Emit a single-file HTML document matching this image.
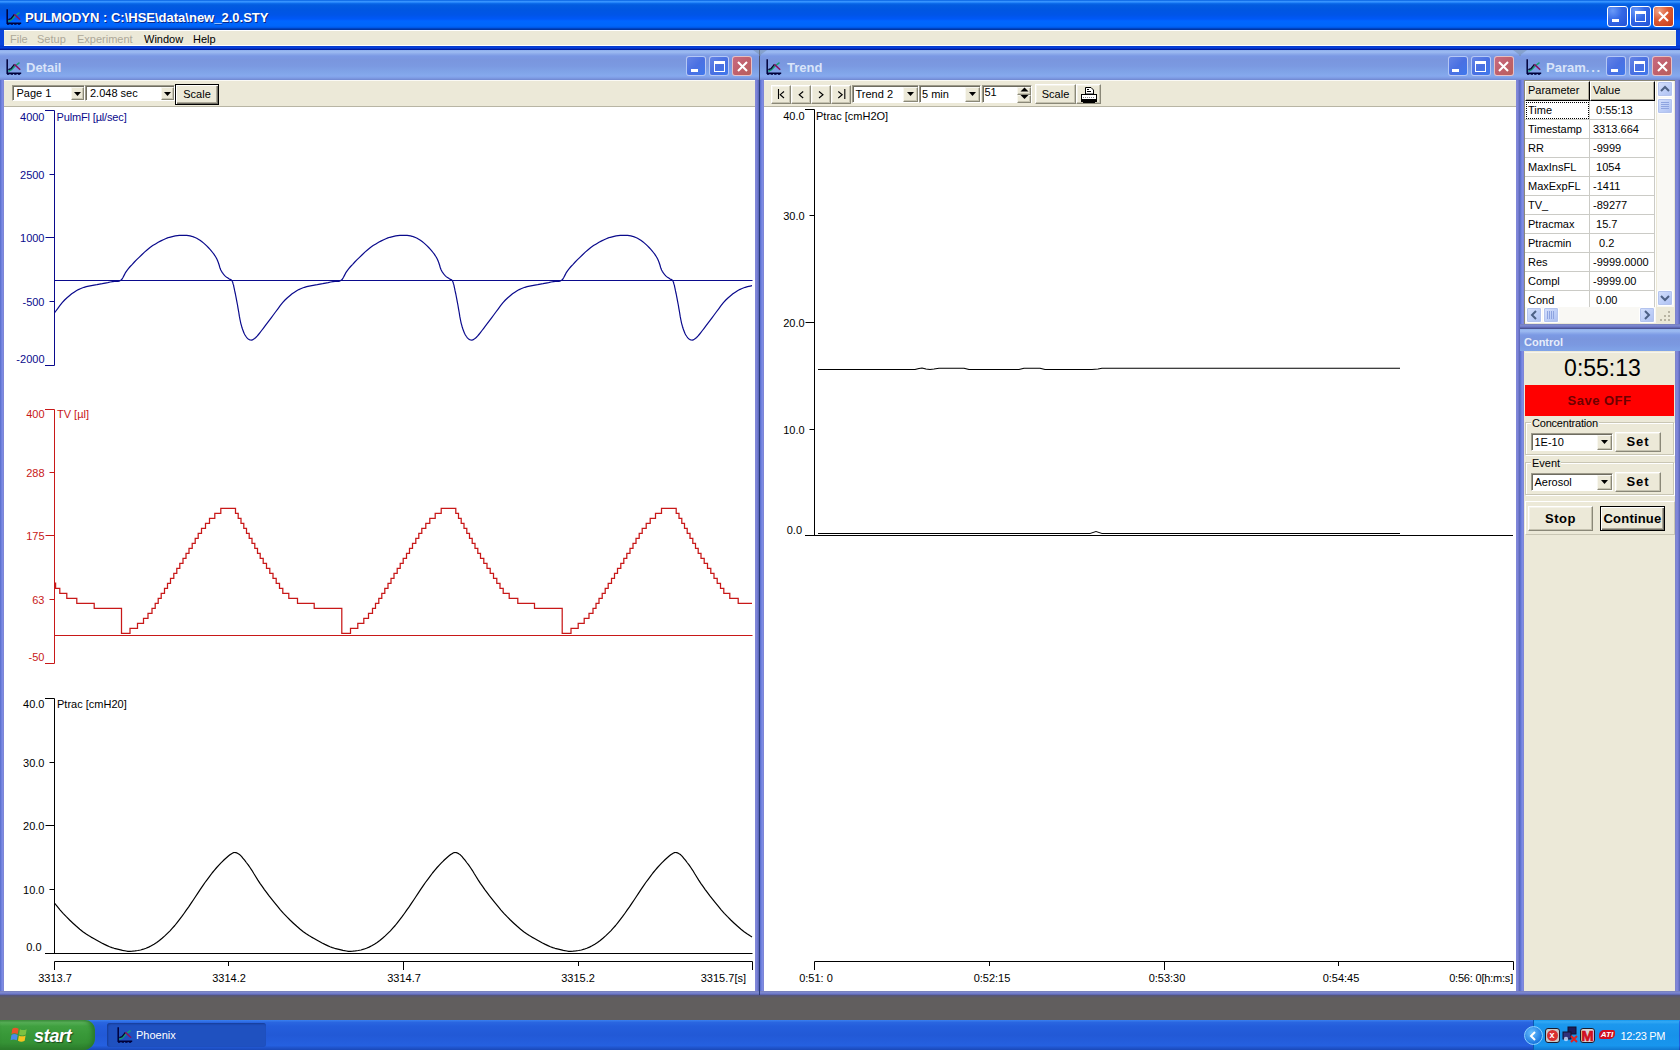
<!DOCTYPE html>
<html><head><meta charset="utf-8"><title>PULMODYN</title>
<style>
*{box-sizing:border-box;margin:0;padding:0}
html,body{width:1680px;height:1050px;overflow:hidden;background:#615e5e;font-family:"Liberation Sans",sans-serif;font-size:11px;color:#000}
.abs{position:absolute}
#frame{position:absolute;left:0;top:0;width:1680px;height:50px;background:linear-gradient(180deg,#0b45dd 0,#0b45dd 45px,#0838c8 46px,#0540dc 47.5px,#0430c0 48.6px,#001088 50px)}
#mtitle{position:absolute;left:0;top:0;width:1680px;height:30px;
 background:linear-gradient(180deg,#0058d8 0,#2a88fc 1px,#3c98ff 1.7px,#2080f8 2.7px,#0a68e8 3.6px,#035ce0 5px,#0056e2 10px,#0055e8 15px,#0058f8 19px,#0066ff 21px,#0066fa 26px,#0058e8 27.5px,#0040b8 28.7px,#003098 30px)}
#mtitle .t{position:absolute;left:25px;top:10px;font-size:13px;font-weight:bold;color:#fff;white-space:nowrap;letter-spacing:0px;text-shadow:1px 1px 0 #0a2a8a}
#menu{position:absolute;left:4px;top:30px;width:1672px;height:16px;background:#ece9d8;border-bottom:1px solid #fff;border-top:1px solid #fff}
#menu span{position:absolute;top:2px;line-height:13px;font-size:11px;white-space:nowrap}
#menu .d{color:#aca899}

.cw{position:absolute;background:linear-gradient(90deg,#5668c8 0,#6c80dc 1.2px,#7f8be4 2.6px,#7c84cc 4.2px,#7c84cc calc(100% - 4.4px),#8289de calc(100% - 3px),#7078cc calc(100% - 1.4px),#5564b4 100%)}
.cwb{position:absolute;left:0;right:0;bottom:0;height:4.6px;background:linear-gradient(180deg,#7880b8 0,#7c88d2 1.8px,#6a74c4 3px,#4c5494 4.4px)}
.ct{position:absolute;left:0;top:0;right:0;height:30px;
 background:linear-gradient(180deg,#8fb0ee 0,#9dbbf1 2px,#8ba9ea 4px,#7b99e4 6px,#7a96de 10px,#7b99e1 16px,#80a4e8 22px,#86a9ee 26px,#7e9ce4 28px,#6f87d0 30px)}
.ct .t{position:absolute;left:26px;top:10px;font-size:13px;font-weight:bold;color:#d9e4f9;white-space:nowrap}
.tb{position:absolute;background:#ece9d8}
.wh{position:absolute;background:#fff}
.lbl{position:absolute;white-space:nowrap;font-size:11px;line-height:13px}
.r{text-align:right}
.combo{position:absolute;background:#fff;border:1px solid;border-color:#9d9a8a #fff #fff #9d9a8a;box-shadow:inset 1px 1px 0 #6e6c60}
.combo .v{position:absolute;font-size:11px;line-height:13px;white-space:nowrap}
.combo .a{position:absolute;right:0px;top:1px;background:#ece9d8;border:1px solid;border-color:#f8f7f0 #8a8878 #8a8878 #f8f7f0;box-shadow:inset -1px -1px 0 #c8c5b2}
.btn{position:absolute;background:#ece9d8;border:1px solid;border-color:#fff #8a8878 #8a8878 #fff;box-shadow:inset -1px -1px 0 #c5c2b0,inset 1px 1px 0 #f4f2e8;text-align:center;white-space:nowrap}
.btn.def{border-color:#000;box-shadow:inset 1px 1px 0 #fff,inset -1px -1px 0 #716f64,inset -2px -2px 0 #aca899}
.xb{position:absolute;width:21px;height:21px;border-radius:3px;border:1px solid #fff}
.xb.in{border-color:rgba(255,255,255,0.6);width:20px;height:20px}

.ax{position:absolute}
.grid{position:absolute;background:#fff}
.gc{position:absolute;height:19px;border-right:1px solid #cbcbc6;border-bottom:1px solid #cbcbc6;background:#fff;font-size:11px;line-height:18px;white-space:nowrap;overflow:hidden}
.gh{position:absolute;height:20px;background:#ece9d8;border:1px solid;border-color:#fff #000 #000 #fff;box-shadow:inset -1px -1px 0 #aca899;font-size:11px;line-height:17px;white-space:nowrap;padding-left:2px}
.sb{position:absolute;background:#f9f8f4}
.sbb{position:absolute;width:16px;height:16px;border-radius:2px;border:1px solid #fff;background:linear-gradient(135deg,#d6e0fb 0%,#bccdf7 60%,#aebff0 100%);box-shadow:0 0 0 1px #b4c4ee inset}
#task{position:absolute;left:0;top:1020px;width:1680px;height:30px;background:linear-gradient(180deg,#3a80f0 0%,#2a66e0 8%,#245edc 20%,#2259d6 50%,#2560e0 85%,#1a48b8 100%)}
#start{position:absolute;left:0;top:0;width:95px;height:30px;border-radius:0 10px 12px 0;background:linear-gradient(180deg,#4a9a4a 0%,#5ab25a 8%,#40a040 20%,#389838 50%,#359235 75%,#2c7c2c 100%);box-shadow:inset -3px 0 4px #2a7a2a}
#start .t{position:absolute;left:34px;top:5.6px;font-size:18px;font-weight:bold;font-style:italic;color:#fff;text-shadow:1px 1px 1px #1a4a1a;letter-spacing:-0.3px}
#tray{position:absolute;left:1533px;top:0;width:146px;height:30px;background:linear-gradient(180deg,#169af0 0%,#33a8f4 6%,#1c98ee 14%,#1792ea 50%,#1896ee 85%,#1078d0 100%);border-left:1px solid #0c58b0}
</style></head>
<body>
<div id="frame">
<div id="mtitle"><svg class="abs" style="left:6px;top:8.5px" width="16" height="16" viewBox="0 0 16 16"><path d="M1.2 0.3V14.2H15.2" stroke="#00003a" stroke-width="1.5" fill="none"/><path d="M1 15.3H15.2" stroke="#00003a" stroke-width="1" stroke-dasharray="2.4 1.2" fill="none"/><path d="M2.3 12.3L5.5 10.6L9 7L13.5 3.6" stroke="#12a070" stroke-width="1.4" fill="none"/><path d="M2.3 10.6L5 9.6L8.4 5.4" stroke="#0a0a30" stroke-width="1.4" fill="none"/><path d="M8.4 5.4L14.2 10.8" stroke="#8a1060" stroke-width="1.5" fill="none"/></svg><div class="t">PULMODYN : C:\HSE\data\new_2.0.STY</div><div class="xb" style="left:1607px;top:6px;background:radial-gradient(circle at 25% 20%,#6a9af8 0%,#3468e6 45%,#2152d6 100%)"><div class="abs" style="left:4px;top:12px;width:7px;height:3px;background:#fff"></div></div><div class="xb" style="left:1630px;top:6px;background:radial-gradient(circle at 25% 20%,#6a9af8 0%,#3468e6 45%,#2152d6 100%)"><div class="abs" style="left:4px;top:4px;width:11px;height:11px;border:1px solid #fff;border-top-width:3px"></div></div><div class="xb" style="left:1653px;top:6px;background:radial-gradient(circle at 25% 20%,#f0a488 0%,#dc5a34 45%,#c43c18 100%)"><svg class="abs" style="left:0px;top:0px" width="19" height="19" viewBox="0 0 19 19"><path d="M5 5L14 14M14 5L5 14" stroke="#fff" stroke-width="2.1" stroke-linecap="butt"/></svg></div></div>
<div id="menu"><span class="d" style="left:6px">File</span><span class="d" style="left:33px">Setup</span><span class="d" style="left:73px">Experiment</span><span style="left:140px">Window</span><span style="left:189px">Help</span></div>
</div>
<div class="cw" style="left:0px;top:50px;width:759px;height:945.3px"><div class="ct"><svg class="abs" style="left:6px;top:9px" width="16" height="16" viewBox="0 0 16 16"><path d="M1.2 0.3V14.2H15.2" stroke="#00003a" stroke-width="1.5" fill="none"/><path d="M1 15.3H15.2" stroke="#00003a" stroke-width="1" stroke-dasharray="2.4 1.2" fill="none"/><path d="M2.3 12.3L5.5 10.6L9 7L13.5 3.6" stroke="#12a070" stroke-width="1.4" fill="none"/><path d="M2.3 10.6L5 9.6L8.4 5.4" stroke="#0a0a30" stroke-width="1.4" fill="none"/><path d="M8.4 5.4L14.2 10.8" stroke="#8a1060" stroke-width="1.5" fill="none"/></svg><div class="t" style="left:26px">Detail</div><div class="xb in" style="left:686px;top:6px;background:linear-gradient(135deg,#6484e6 0%,#4a70e2 50%,#3f78ec 100%)"><div class="abs" style="left:3.5px;top:11.5px;width:7px;height:3px;background:#fff"></div></div><div class="xb in" style="left:709px;top:6px;background:linear-gradient(135deg,#6484e6 0%,#4a70e2 50%,#3f78ec 100%)"><div class="abs" style="left:3.5px;top:3.5px;width:11px;height:11px;border:1px solid #fff;border-top-width:3px"></div></div><div class="xb in" style="left:732px;top:6px;background:linear-gradient(135deg,#c86a80 0%,#c0606c 50%,#b8605c 100%)"><svg class="abs" style="left:-0.5px;top:-0.5px" width="19" height="19" viewBox="0 0 19 19"><path d="M5 5L14 14M14 5L5 14" stroke="#fff" stroke-width="2.1" stroke-linecap="butt"/></svg></div></div><div class="tb" style="left:4px;top:30px;width:750.7px;height:27px;border-top:1px solid #fbfaf5;border-bottom:1px solid #b8b5a4"></div><div class="combo" style="left:11.5px;top:35px;width:73.5px;height:16px"><div class="v" style="left:4px;top:1px">Page 1</div><div class="a" style="width:13px;height:13px"><svg class="abs" style="left:2.0px;top:3.5px" width="7" height="4" viewBox="0 0 7 4"><path d="M0 0H7L3.5 4Z" fill="#000"/></svg></div></div><div class="combo" style="left:85px;top:35px;width:89.5px;height:16px"><div class="v" style="left:4px;top:1px">2.048 sec</div><div class="a" style="width:13px;height:13px"><svg class="abs" style="left:2.0px;top:3.5px" width="7" height="4" viewBox="0 0 7 4"><path d="M0 0H7L3.5 4Z" fill="#000"/></svg></div></div><div class="btn def" style="left:175px;top:34px;width:44px;height:21px;line-height:19px;">Scale</div><div class="wh" style="left:4px;top:57px;width:750.7px;height:883.7px"></div><svg class="abs" style="left:0;top:0" width="758" height="940" viewBox="0 50 758 940" shape-rendering="auto"><path d="M45 110.5H54.5V365.5H45" stroke="#0a0a8c" stroke-width="1" fill="none"/><path d="M49.5 174.5H54.5" stroke="#0a0a8c" stroke-width="1"/><path d="M45.5 237.5H54.5" stroke="#0a0a8c" stroke-width="1"/><path d="M49.5 301.5H54.5" stroke="#0a0a8c" stroke-width="1"/><path d="M54.5 280.5H752.5" stroke="#0a0a8c" stroke-width="1"/><path d="M54.5 312.9 L55.1 312.0 L57.5 308.8 L59.8 305.7 L62.2 302.7 L64.6 300.0 L67.0 297.7 L69.4 295.7 L71.7 293.8 L74.1 292.2 L76.3 290.8 L78.4 289.6 L80.3 288.7 L82.1 288.0 L84.1 287.3 L86.3 286.7 L88.8 286.1 L91.4 285.6 L94.1 285.1 L96.9 284.7 L99.6 284.2 L102.3 283.7 L105.1 283.1 L107.8 282.6 L110.3 282.0 L112.6 281.6 L114.6 281.4 L116.3 281.4 L117.9 281.3 L119.4 281.1 L120.8 280.3 L122.1 279.0 L123.1 277.2 L124.2 275.1 L125.3 272.9 L126.7 270.8 L128.4 268.7 L130.2 266.5 L132.3 264.3 L134.4 262.0 L136.7 259.7 L139.1 257.3 L141.8 254.7 L144.5 252.1 L147.3 249.7 L150.0 247.5 L152.7 245.6 L155.5 243.9 L158.2 242.3 L160.9 240.9 L163.3 239.7 L165.5 238.7 L167.5 237.9 L169.5 237.3 L171.4 236.8 L173.3 236.3 L175.3 235.9 L177.4 235.6 L179.4 235.4 L181.4 235.3 L183.3 235.3 L185.1 235.3 L186.8 235.4 L188.4 235.6 L190.1 235.9 L191.7 236.3 L193.4 236.9 L195.0 237.5 L196.7 238.3 L198.3 239.2 L200.0 240.3 L201.7 241.5 L203.4 242.9 L205.1 244.4 L206.7 245.9 L208.3 247.5 L209.8 249.1 L211.3 250.8 L212.6 252.5 L213.9 254.2 L215.0 255.8 L215.9 257.2 L216.6 258.6 L217.2 259.8 L217.7 261.1 L218.3 262.5 L218.8 264.0 L219.3 265.5 L219.7 267.1 L220.2 268.6 L220.8 270.0 L221.5 271.3 L222.4 272.6 L223.3 273.8 L224.1 274.8 L225.0 275.8 L225.8 276.6 L226.7 277.3 L227.5 277.8 L228.3 278.3 L229.0 278.8 L229.6 279.2 L230.2 279.4 L230.8 279.6 L231.3 279.9 L231.7 280.3 L232.1 280.8 L232.3 281.4 L232.6 282.0 L232.8 282.7 L233.0 283.5 L233.2 284.2 L233.4 284.7 L233.6 285.4 L233.8 286.6 L234.2 288.3 L234.7 290.9 L235.4 294.0 L236.1 297.6 L236.8 301.4 L237.5 305.0 L238.1 308.7 L238.8 312.5 L239.4 316.4 L240.1 320.0 L240.8 323.3 L241.6 326.2 L242.4 328.8 L243.2 331.1 L244.1 333.2 L245.0 335.0 L246.0 336.5 L247.0 337.8 L248.1 338.9 L249.2 339.6 L250.3 340.0 L251.4 340.1 L252.4 339.9 L253.4 339.3 L254.6 338.5 L255.8 337.5 L257.1 336.2 L258.5 334.5 L260.0 332.6 L261.6 330.5 L263.3 328.3 L265.1 325.9 L267.0 323.4 L269.1 320.6 L271.2 317.8 L273.3 315.0 L275.5 312.0 L277.9 308.8 L280.2 305.7 L282.6 302.7 L285.0 300.0 L287.4 297.7 L289.8 295.7 L292.1 293.8 L294.5 292.2 L296.7 290.8 L298.8 289.6 L300.7 288.7 L302.5 288.0 L304.5 287.3 L306.7 286.7 L309.2 286.1 L311.8 285.6 L314.5 285.1 L317.3 284.7 L320.0 284.2 L322.7 283.7 L325.5 283.1 L328.2 282.6 L330.7 282.0 L333.0 281.6 L335.0 281.4 L336.7 281.4 L338.3 281.3 L339.8 281.1 L341.2 280.3 L342.5 279.0 L343.5 277.2 L344.6 275.1 L345.7 272.9 L347.1 270.8 L348.8 268.7 L350.6 266.5 L352.7 264.3 L354.8 262.0 L357.1 259.7 L359.5 257.3 L362.2 254.7 L364.9 252.1 L367.7 249.7 L370.4 247.5 L373.1 245.6 L375.9 243.9 L378.6 242.3 L381.3 240.9 L383.7 239.7 L385.9 238.7 L387.9 237.9 L389.9 237.3 L391.8 236.8 L393.7 236.3 L395.7 235.9 L397.8 235.6 L399.8 235.4 L401.8 235.3 L403.7 235.3 L405.5 235.3 L407.2 235.4 L408.8 235.6 L410.5 235.9 L412.1 236.3 L413.8 236.9 L415.4 237.5 L417.1 238.3 L418.7 239.2 L420.4 240.3 L422.1 241.5 L423.8 242.9 L425.5 244.4 L427.1 245.9 L428.7 247.5 L430.2 249.1 L431.7 250.8 L433.0 252.5 L434.3 254.2 L435.4 255.8 L436.3 257.2 L437.0 258.6 L437.6 259.8 L438.1 261.1 L438.7 262.5 L439.2 264.0 L439.7 265.5 L440.1 267.1 L440.6 268.6 L441.2 270.0 L441.9 271.3 L442.8 272.6 L443.7 273.8 L444.5 274.8 L445.4 275.8 L446.2 276.6 L447.1 277.3 L447.9 277.8 L448.7 278.3 L449.4 278.8 L450.0 279.2 L450.6 279.4 L451.2 279.6 L451.7 279.9 L452.1 280.3 L452.5 280.8 L452.7 281.4 L453.0 282.0 L453.2 282.7 L453.4 283.5 L453.6 284.2 L453.8 284.7 L454.0 285.4 L454.2 286.6 L454.6 288.3 L455.1 290.9 L455.8 294.0 L456.5 297.6 L457.2 301.4 L457.9 305.0 L458.5 308.7 L459.2 312.5 L459.8 316.4 L460.5 320.0 L461.2 323.3 L462.0 326.2 L462.8 328.8 L463.6 331.1 L464.5 333.2 L465.4 335.0 L466.4 336.5 L467.4 337.8 L468.5 338.9 L469.6 339.6 L470.7 340.0 L471.8 340.1 L472.8 339.9 L473.8 339.3 L475.0 338.5 L476.2 337.5 L477.5 336.2 L478.9 334.5 L480.4 332.6 L482.0 330.5 L483.7 328.3 L485.5 325.9 L487.4 323.4 L489.5 320.6 L491.6 317.8 L493.7 315.0 L495.9 312.0 L498.3 308.8 L500.6 305.7 L503.0 302.7 L505.4 300.0 L507.8 297.7 L510.2 295.7 L512.5 293.8 L514.9 292.2 L517.1 290.8 L519.2 289.6 L521.1 288.7 L522.9 288.0 L524.9 287.3 L527.1 286.7 L529.6 286.1 L532.2 285.6 L534.9 285.1 L537.7 284.7 L540.4 284.2 L543.1 283.7 L545.9 283.1 L548.6 282.6 L551.1 282.0 L553.4 281.6 L555.4 281.4 L557.1 281.4 L558.7 281.3 L560.2 281.1 L561.6 280.3 L562.9 279.0 L563.9 277.2 L565.0 275.1 L566.1 272.9 L567.5 270.8 L569.2 268.7 L571.0 266.5 L573.1 264.3 L575.2 262.0 L577.5 259.7 L579.9 257.3 L582.6 254.7 L585.3 252.1 L588.1 249.7 L590.8 247.5 L593.5 245.6 L596.3 243.9 L599.0 242.3 L601.7 240.9 L604.1 239.7 L606.3 238.7 L608.3 237.9 L610.3 237.3 L612.2 236.8 L614.1 236.3 L616.1 235.9 L618.2 235.6 L620.2 235.4 L622.2 235.3 L624.1 235.3 L625.9 235.3 L627.6 235.4 L629.2 235.6 L630.9 235.9 L632.5 236.3 L634.2 236.9 L635.8 237.5 L637.5 238.3 L639.1 239.2 L640.8 240.3 L642.5 241.5 L644.2 242.9 L645.9 244.4 L647.5 245.9 L649.1 247.5 L650.6 249.1 L652.1 250.8 L653.4 252.5 L654.7 254.2 L655.8 255.8 L656.7 257.2 L657.4 258.6 L658.0 259.8 L658.5 261.1 L659.1 262.5 L659.6 264.0 L660.1 265.5 L660.5 267.1 L661.0 268.6 L661.6 270.0 L662.3 271.3 L663.2 272.6 L664.1 273.8 L664.9 274.8 L665.8 275.8 L666.6 276.6 L667.5 277.3 L668.3 277.8 L669.1 278.3 L669.8 278.8 L670.4 279.2 L671.0 279.4 L671.6 279.6 L672.1 279.9 L672.5 280.3 L672.9 280.8 L673.1 281.4 L673.4 282.0 L673.6 282.7 L673.8 283.5 L674.0 284.2 L674.2 284.7 L674.4 285.4 L674.6 286.6 L675.0 288.3 L675.5 290.9 L676.2 294.0 L676.9 297.6 L677.6 301.4 L678.3 305.0 L678.9 308.7 L679.6 312.5 L680.2 316.4 L680.9 320.0 L681.6 323.3 L682.4 326.2 L683.2 328.8 L684.0 331.1 L684.9 333.2 L685.8 335.0 L686.8 336.5 L687.8 337.8 L688.9 338.9 L690.0 339.6 L691.1 340.0 L692.2 340.1 L693.2 339.9 L694.2 339.3 L695.4 338.5 L696.6 337.5 L697.9 336.2 L699.3 334.5 L700.8 332.6 L702.4 330.5 L704.1 328.3 L705.9 325.9 L707.8 323.4 L709.9 320.6 L712.0 317.8 L714.1 315.0 L716.3 312.0 L718.7 308.8 L721.0 305.7 L723.4 302.7 L725.8 300.0 L728.2 297.7 L730.6 295.7 L732.9 293.8 L735.3 292.2 L737.5 290.8 L739.6 289.6 L741.5 288.7 L743.3 288.0 L745.3 287.3 L747.5 286.7 L750.2 286.1 L752.0 285.7" stroke="#0a0a8c" stroke-width="1.2" fill="none" stroke-linejoin="round"/><path d="M45 409.5H54.5V663.5H45" stroke="#c81818" stroke-width="1" fill="none"/><path d="M49.5 472.5H54.5" stroke="#c81818" stroke-width="1"/><path d="M45.5 535.5H54.5" stroke="#c81818" stroke-width="1"/><path d="M49.5 599.5H54.5" stroke="#c81818" stroke-width="1"/><path d="M54.5 635.5H752.5" stroke="#c81818" stroke-width="1"/><path d="M55.6 588.4 L55.6 582.5 L55.6 588.4 L54.5 588.4 L59.8 588.4 L59.8 593.4 L66.8 593.4 L66.8 598.4 L76.8 598.4 L76.8 603.4 L94.2 603.4 L94.2 608.4 L121.5 608.4 L121.5 633.4 L130.0 633.4 L130.0 628.4 L137.5 628.4 L137.5 623.4 L143.5 623.4 L143.5 618.4 L148.0 618.4 L148.0 613.4 L152.0 613.4 L152.0 608.4 L155.2 608.4 L155.2 603.4 L158.2 603.4 L158.2 598.4 L161.2 598.4 L161.2 593.4 L164.5 593.4 L164.5 588.4 L167.5 588.4 L167.5 583.4 L170.5 583.4 L170.5 578.4 L173.8 578.4 L173.8 573.4 L176.8 573.4 L176.8 568.4 L179.8 568.4 L179.8 563.4 L183.0 563.4 L183.0 558.4 L186.0 558.4 L186.0 553.4 L189.0 553.4 L189.0 548.4 L192.2 548.4 L192.2 543.4 L195.2 543.4 L195.2 538.4 L198.2 538.4 L198.2 533.4 L201.5 533.4 L201.5 528.4 L205.5 528.4 L205.5 523.4 L209.5 523.4 L209.5 518.4 L214.8 518.4 L214.8 513.4 L220.8 513.4 L220.8 508.4 L235.5 508.4 L235.5 513.4 L238.2 513.4 L238.2 518.4 L241.0 518.4 L241.0 523.4 L243.8 523.4 L243.8 528.4 L246.5 528.4 L246.5 533.4 L249.2 533.4 L249.2 538.4 L252.0 538.4 L252.0 543.4 L254.8 543.4 L254.8 548.4 L257.5 548.4 L257.5 553.4 L260.2 553.4 L260.2 558.4 L263.2 558.4 L263.2 563.4 L266.5 563.4 L266.5 568.4 L269.8 568.4 L269.8 573.4 L273.0 573.4 L273.0 578.4 L276.2 578.4 L276.2 583.4 L279.5 583.4 L279.5 588.4 L282.8 588.4 L282.8 593.4 L288.8 593.4 L288.8 598.4 L297.5 598.4 L297.5 603.4 L314.2 603.4 L314.2 608.4 L341.8 608.4 L341.8 633.4 L350.5 633.4 L350.5 628.4 L357.8 628.4 L357.8 623.4 L363.8 623.4 L363.8 618.4 L368.5 618.4 L368.5 613.4 L372.5 613.4 L372.5 608.4 L375.5 608.4 L375.5 603.4 L378.8 603.4 L378.8 598.4 L381.8 598.4 L381.8 593.4 L384.8 593.4 L384.8 588.4 L388.0 588.4 L388.0 583.4 L391.0 583.4 L391.0 578.4 L394.0 578.4 L394.0 573.4 L397.2 573.4 L397.2 568.4 L400.2 568.4 L400.2 563.4 L403.2 563.4 L403.2 558.4 L406.5 558.4 L406.5 553.4 L409.5 553.4 L409.5 548.4 L412.5 548.4 L412.5 543.4 L415.8 543.4 L415.8 538.4 L418.8 538.4 L418.8 533.4 L421.8 533.4 L421.8 528.4 L425.8 528.4 L425.8 523.4 L429.8 523.4 L429.8 518.4 L435.2 518.4 L435.2 513.4 L441.2 513.4 L441.2 508.4 L455.8 508.4 L455.8 513.4 L458.5 513.4 L458.5 518.4 L461.2 518.4 L461.2 523.4 L464.0 523.4 L464.0 528.4 L466.8 528.4 L466.8 533.4 L469.5 533.4 L469.5 538.4 L472.2 538.4 L472.2 543.4 L475.0 543.4 L475.0 548.4 L477.8 548.4 L477.8 553.4 L480.5 553.4 L480.5 558.4 L483.8 558.4 L483.8 563.4 L487.0 563.4 L487.0 568.4 L490.2 568.4 L490.2 573.4 L493.5 573.4 L493.5 578.4 L496.8 578.4 L496.8 583.4 L500.0 583.4 L500.0 588.4 L503.2 588.4 L503.2 593.4 L509.2 593.4 L509.2 598.4 L517.8 598.4 L517.8 603.4 L534.5 603.4 L534.5 608.4 L562.2 608.4 L562.2 633.4 L571.0 633.4 L571.0 628.4 L578.2 628.4 L578.2 623.4 L584.2 623.4 L584.2 618.4 L589.0 618.4 L589.0 613.4 L593.0 613.4 L593.0 608.4 L596.0 608.4 L596.0 603.4 L599.0 603.4 L599.0 598.4 L602.2 598.4 L602.2 593.4 L605.2 593.4 L605.2 588.4 L608.2 588.4 L608.2 583.4 L611.5 583.4 L611.5 578.4 L614.5 578.4 L614.5 573.4 L617.5 573.4 L617.5 568.4 L620.8 568.4 L620.8 563.4 L623.8 563.4 L623.8 558.4 L626.8 558.4 L626.8 553.4 L630.0 553.4 L630.0 548.4 L633.0 548.4 L633.0 543.4 L636.0 543.4 L636.0 538.4 L639.2 538.4 L639.2 533.4 L642.2 533.4 L642.2 528.4 L646.2 528.4 L646.2 523.4 L650.2 523.4 L650.2 518.4 L655.5 518.4 L655.5 513.4 L661.5 513.4 L661.5 508.4 L676.2 508.4 L676.2 513.4 L679.0 513.4 L679.0 518.4 L681.8 518.4 L681.8 523.4 L684.5 523.4 L684.5 528.4 L687.2 528.4 L687.2 533.4 L690.0 533.4 L690.0 538.4 L692.8 538.4 L692.8 543.4 L695.5 543.4 L695.5 548.4 L698.2 548.4 L698.2 553.4 L701.0 553.4 L701.0 558.4 L704.2 558.4 L704.2 563.4 L707.5 563.4 L707.5 568.4 L710.8 568.4 L710.8 573.4 L714.0 573.4 L714.0 578.4 L717.2 578.4 L717.2 583.4 L720.5 583.4 L720.5 588.4 L723.8 588.4 L723.8 593.4 L729.8 593.4 L729.8 598.4 L738.2 598.4 L738.2 603.4 L752.0 603.4" stroke="#c81818" stroke-width="1.25" fill="none" stroke-linejoin="miter"/><path d="M45 698.5H54.5V953.5" stroke="#000" stroke-width="1" fill="none"/><path d="M49.5 762.5H54.5" stroke="#000" stroke-width="1"/><path d="M45.5 825.5H54.5" stroke="#000" stroke-width="1"/><path d="M49.5 889.5H54.5" stroke="#000" stroke-width="1"/><path d="M45 953.5H752.5" stroke="#000" stroke-width="1"/><path d="M54.5 903.2 L57.0 906.2 L60.0 909.8 L63.1 913.3 L66.3 916.7 L69.6 920.0 L73.0 923.2 L76.4 926.3 L79.8 929.2 L82.9 931.7 L85.8 933.8 L88.5 935.6 L91.1 937.1 L93.7 938.5 L96.3 940.0 L99.0 941.5 L101.7 943.0 L104.5 944.4 L107.1 945.6 L109.6 946.7 L112.0 947.6 L114.2 948.3 L116.4 948.8 L118.5 949.3 L120.6 949.8 L122.5 950.3 L124.3 950.7 L126.0 951.0 L127.9 951.3 L130.0 951.3 L132.4 951.2 L135.0 950.9 L137.8 950.5 L140.6 950.0 L143.3 949.2 L146.0 948.2 L148.7 947.1 L151.3 945.8 L154.0 944.2 L156.7 942.5 L159.4 940.5 L162.1 938.3 L164.8 935.9 L167.4 933.4 L170.0 930.8 L172.4 928.2 L174.8 925.5 L177.1 922.6 L179.4 919.7 L181.7 916.7 L184.0 913.5 L186.3 910.2 L188.7 906.9 L191.0 903.4 L193.3 900.0 L195.6 896.5 L198.0 892.9 L200.3 889.4 L202.7 885.9 L205.0 882.5 L207.4 879.3 L209.8 876.1 L212.1 873.0 L214.5 870.1 L216.7 867.5 L218.9 865.1 L221.0 862.9 L223.1 860.8 L225.0 859.0 L226.7 857.5 L228.1 856.3 L229.3 855.3 L230.3 854.5 L231.2 853.9 L232.0 853.4 L232.7 853.0 L233.4 852.7 L233.9 852.6 L234.4 852.5 L235.0 852.5 L235.6 852.6 L236.2 852.7 L236.7 852.9 L237.4 853.2 L238.0 853.6 L238.6 854.0 L239.2 854.3 L239.9 854.8 L240.7 855.6 L241.7 856.7 L243.0 858.3 L244.6 860.2 L246.3 862.5 L248.2 864.9 L250.0 867.5 L251.9 870.3 L253.8 873.5 L255.8 876.7 L257.9 880.1 L260.0 883.3 L262.2 886.4 L264.4 889.6 L266.7 892.7 L269.1 895.9 L271.7 899.2 L274.5 902.6 L277.4 906.2 L280.4 909.8 L283.5 913.3 L286.7 916.7 L290.0 920.0 L293.4 923.2 L296.8 926.3 L300.2 929.2 L303.3 931.7 L306.2 933.8 L308.9 935.6 L311.5 937.1 L314.1 938.5 L316.7 940.0 L319.4 941.5 L322.1 943.0 L324.9 944.4 L327.5 945.6 L330.0 946.7 L332.4 947.6 L334.6 948.3 L336.8 948.8 L338.9 949.3 L341.0 949.8 L342.9 950.3 L344.7 950.7 L346.4 951.0 L348.3 951.3 L350.4 951.3 L352.8 951.2 L355.4 950.9 L358.2 950.5 L361.0 950.0 L363.7 949.2 L366.4 948.2 L369.1 947.1 L371.7 945.8 L374.4 944.2 L377.1 942.5 L379.8 940.5 L382.5 938.3 L385.2 935.9 L387.8 933.4 L390.4 930.8 L392.8 928.2 L395.2 925.5 L397.5 922.6 L399.8 919.7 L402.1 916.7 L404.4 913.5 L406.7 910.2 L409.1 906.9 L411.4 903.4 L413.7 900.0 L416.0 896.5 L418.4 892.9 L420.7 889.4 L423.1 885.9 L425.4 882.5 L427.8 879.3 L430.2 876.1 L432.5 873.0 L434.9 870.1 L437.1 867.5 L439.3 865.1 L441.4 862.9 L443.5 860.8 L445.4 859.0 L447.1 857.5 L448.5 856.3 L449.7 855.3 L450.7 854.5 L451.6 853.9 L452.4 853.4 L453.1 853.0 L453.8 852.7 L454.3 852.6 L454.8 852.5 L455.4 852.5 L456.0 852.6 L456.6 852.7 L457.1 852.9 L457.8 853.2 L458.4 853.6 L459.0 854.0 L459.6 854.3 L460.3 854.8 L461.1 855.6 L462.1 856.7 L463.4 858.3 L465.0 860.2 L466.7 862.5 L468.6 864.9 L470.4 867.5 L472.3 870.3 L474.2 873.5 L476.2 876.7 L478.3 880.1 L480.4 883.3 L482.6 886.4 L484.8 889.6 L487.1 892.7 L489.5 895.9 L492.1 899.2 L494.9 902.6 L497.8 906.2 L500.8 909.8 L503.9 913.3 L507.1 916.7 L510.4 920.0 L513.8 923.2 L517.2 926.3 L520.6 929.2 L523.7 931.7 L526.6 933.8 L529.3 935.6 L531.9 937.1 L534.5 938.5 L537.1 940.0 L539.8 941.5 L542.5 943.0 L545.3 944.4 L547.9 945.6 L550.4 946.7 L552.8 947.6 L555.0 948.3 L557.2 948.8 L559.3 949.3 L561.4 949.8 L563.3 950.3 L565.1 950.7 L566.8 951.0 L568.7 951.3 L570.8 951.3 L573.2 951.2 L575.8 950.9 L578.6 950.5 L581.4 950.0 L584.1 949.2 L586.8 948.2 L589.5 947.1 L592.1 945.8 L594.8 944.2 L597.5 942.5 L600.2 940.5 L602.9 938.3 L605.6 935.9 L608.2 933.4 L610.8 930.8 L613.2 928.2 L615.6 925.5 L617.9 922.6 L620.2 919.7 L622.5 916.7 L624.8 913.5 L627.1 910.2 L629.5 906.9 L631.8 903.4 L634.1 900.0 L636.4 896.5 L638.8 892.9 L641.1 889.4 L643.5 885.9 L645.8 882.5 L648.2 879.3 L650.6 876.1 L652.9 873.0 L655.3 870.1 L657.5 867.5 L659.7 865.1 L661.8 862.9 L663.9 860.8 L665.8 859.0 L667.5 857.5 L668.9 856.3 L670.1 855.3 L671.1 854.5 L672.0 853.9 L672.8 853.4 L673.5 853.0 L674.2 852.7 L674.7 852.6 L675.2 852.5 L675.8 852.5 L676.4 852.6 L677.0 852.7 L677.5 852.9 L678.2 853.2 L678.8 853.6 L679.4 854.0 L680.0 854.3 L680.7 854.8 L681.5 855.6 L682.5 856.7 L683.8 858.3 L685.4 860.2 L687.1 862.5 L689.0 864.9 L690.8 867.5 L692.7 870.3 L694.6 873.5 L696.6 876.7 L698.7 880.1 L700.8 883.3 L703.0 886.4 L705.2 889.6 L707.5 892.7 L709.9 895.9 L712.5 899.2 L715.3 902.6 L718.2 906.2 L721.2 909.8 L724.3 913.3 L727.5 916.7 L730.8 920.0 L734.2 923.2 L737.6 926.3 L741.0 929.2 L744.1 931.7 L747.0 933.8 L749.7 935.6 L752.0 936.9" stroke="#000" stroke-width="1.2" fill="none" stroke-linejoin="round"/><path d="M54.5 970V961.5H752.5V970" stroke="#000" stroke-width="1" fill="none"/><path d="M228.5 961.5V966M403.5 961.5V970M578.5 961.5V966" stroke="#000" stroke-width="1" fill="none"/></svg><div class="lbl r" style="left:-35.5px;top:61px;width:80px;color:#0a0a8c">4000</div><div class="lbl" style="left:56.5px;top:61px;color:#0a0a8c"><span style="letter-spacing:-0.15px">PulmFl [µl/sec]</span></div><div class="lbl r" style="left:-35.5px;top:118.6px;width:80px;color:#0a0a8c">2500</div><div class="lbl r" style="left:-35.5px;top:181.6px;width:80px;color:#0a0a8c">1000</div><div class="lbl r" style="left:-35.5px;top:245.60000000000002px;width:80px;color:#0a0a8c">-500</div><div class="lbl r" style="left:-35.5px;top:302.6px;width:80px;color:#0a0a8c">-2000</div><div class="lbl r" style="left:-35.5px;top:358px;width:80px;color:#c81818">400</div><div class="lbl" style="left:57px;top:358px;color:#c81818">TV [µl]</div><div class="lbl r" style="left:-35.5px;top:416.6px;width:80px;color:#c81818">288</div><div class="lbl r" style="left:-35.5px;top:479.6px;width:80px;color:#c81818">175</div><div class="lbl r" style="left:-35.5px;top:543.6px;width:80px;color:#c81818">63</div><div class="lbl r" style="left:-35.5px;top:600.6px;width:80px;color:#c81818">-50</div><div class="lbl r" style="left:-35.5px;top:648px;width:80px;color:#000">40.0</div><div class="lbl" style="left:57px;top:648px;color:#000">Ptrac [cmH20]</div><div class="lbl r" style="left:-35.5px;top:706.6px;width:80px;color:#000">30.0</div><div class="lbl r" style="left:-35.5px;top:769.6px;width:80px;color:#000">20.0</div><div class="lbl r" style="left:-35.5px;top:833.6px;width:80px;color:#000">10.0</div><div class="lbl r" style="left:-38.5px;top:891px;width:80px;color:#000">0.0</div><div class="lbl" style="left:5px;top:922px;width:100px;text-align:center;">3313.7</div><div class="lbl" style="left:179px;top:922px;width:100px;text-align:center;">3314.2</div><div class="lbl" style="left:354px;top:922px;width:100px;text-align:center;">3314.7</div><div class="lbl" style="left:528px;top:922px;width:100px;text-align:center;">3315.2</div><div class="lbl r" style="left:666px;top:922px;width:80px;">3315.7[s]</div><div class="cwb"></div></div>
<div class="cw" style="left:760px;top:50px;width:759.6px;height:945.3px"><div class="ct"><svg class="abs" style="left:6px;top:9px" width="16" height="16" viewBox="0 0 16 16"><path d="M1.2 0.3V14.2H15.2" stroke="#00003a" stroke-width="1.5" fill="none"/><path d="M1 15.3H15.2" stroke="#00003a" stroke-width="1" stroke-dasharray="2.4 1.2" fill="none"/><path d="M2.3 12.3L5.5 10.6L9 7L13.5 3.6" stroke="#12a070" stroke-width="1.4" fill="none"/><path d="M2.3 10.6L5 9.6L8.4 5.4" stroke="#0a0a30" stroke-width="1.4" fill="none"/><path d="M8.4 5.4L14.2 10.8" stroke="#8a1060" stroke-width="1.5" fill="none"/></svg><div class="t" style="left:27px">Trend</div><div class="xb in" style="left:687.6px;top:6px;background:linear-gradient(135deg,#6484e6 0%,#4a70e2 50%,#3f78ec 100%)"><div class="abs" style="left:3.5px;top:11.5px;width:7px;height:3px;background:#fff"></div></div><div class="xb in" style="left:710.6px;top:6px;background:linear-gradient(135deg,#6484e6 0%,#4a70e2 50%,#3f78ec 100%)"><div class="abs" style="left:3.5px;top:3.5px;width:11px;height:11px;border:1px solid #fff;border-top-width:3px"></div></div><div class="xb in" style="left:733.6px;top:6px;background:linear-gradient(135deg,#c86a80 0%,#c0606c 50%,#b8605c 100%)"><svg class="abs" style="left:-0.5px;top:-0.5px" width="19" height="19" viewBox="0 0 19 19"><path d="M5 5L14 14M14 5L5 14" stroke="#fff" stroke-width="2.1" stroke-linecap="butt"/></svg></div></div><div class="tb" style="left:4px;top:30px;width:751.8px;height:27px;border-top:1px solid #fbfaf5;border-bottom:1px solid #b8b5a4"></div><div class="btn" style="left:11px;top:35px;width:20px;height:19px"></div><div class="btn" style="left:31px;top:35px;width:20px;height:19px"></div><div class="btn" style="left:51px;top:35px;width:20px;height:19px"></div><div class="btn" style="left:71px;top:35px;width:20px;height:19px"></div><div class="combo" style="left:92px;top:34.5px;width:66.5px;height:18px"><div class="v" style="left:2.5px;top:2px">Trend 2</div><div class="a" style="width:15px;height:15px"><svg class="abs" style="left:3.0px;top:4.5px" width="7" height="4" viewBox="0 0 7 4"><path d="M0 0H7L3.5 4Z" fill="#000"/></svg></div></div><div class="combo" style="left:158.5px;top:34.5px;width:62.5px;height:18px"><div class="v" style="left:2.5px;top:2px">5 min</div><div class="a" style="width:15px;height:15px"><svg class="abs" style="left:3.0px;top:4.5px" width="7" height="4" viewBox="0 0 7 4"><path d="M0 0H7L3.5 4Z" fill="#000"/></svg></div></div><div class="combo" style="left:221.5px;top:34.5px;width:50.5px;height:18px"><div class="v" style="left:2px;top:0.5px">51</div><div class="a" style="width:14px;height:8px"></div><div class="a" style="width:14px;height:8px;top:9px"></div></div><div class="btn" style="left:275px;top:34px;width:41px;height:20px;line-height:18px;">Scale</div><div class="btn" style="left:316px;top:34px;width:25px;height:20px;line-height:18px;"></div><div class="wh" style="left:4px;top:57px;width:751.8px;height:883.7px"></div><svg class="abs" style="left:0;top:0" width="758" height="940" viewBox="760 50 758 940"><path d="M778.5 89V99M784 91.5L780.2 94.7L784 98 M803.2 91.5L799.2 94.7L803.2 98 M819 91.5L823 94.7L819 98 M838.3 91.5L842.2 94.7L838.3 98M844.8 89V99" stroke="#000" stroke-width="1.1" fill="none"/><path d="M1020.5 91.5L1024.5 87.5L1028.5 91.5Z M1020.5 95L1024.5 99L1028.5 95Z" fill="#000"/><path d="M1085.5 94V87.5H1091L1093.5 90V94Z" fill="#fff" stroke="#000" stroke-width="1"/><path d="M1087 89.5H1089M1087 91.5H1091" stroke="#000" stroke-width="1"/><rect x="1081.5" y="94.5" width="15" height="7" fill="#fff" stroke="#000" stroke-width="1"/><rect x="1082" y="99" width="14" height="2" fill="#000"/><path d="M1083 97.5H1095" stroke="#888" stroke-width="1" stroke-dasharray="1 1"/><path d="M1083 102.5H1095" stroke="#000" stroke-width="1"/><path d="M805 109.5H814.5V535.5" stroke="#000" stroke-width="1" fill="none"/><path d="M809.5 215.5H814.5" stroke="#000" stroke-width="1"/><path d="M805.5 322.5H814.5" stroke="#000" stroke-width="1"/><path d="M809.5 429.5H814.5" stroke="#000" stroke-width="1"/><path d="M805 535.5H1513" stroke="#000" stroke-width="1"/><path d="M818 533.5H1090L1093 532.5L1096 531.5L1099 532.5L1102 533.5H1400" stroke="#000" stroke-width="1" fill="none"/><path d="M818 369.5H915L919 368.5L922 368L926 369L930 369.5L934 369L939 368.2H964L969 369.5H1019L1024 368.2H1040L1045 369.5H1092L1098 369L1102 368.2H1400" stroke="#000" stroke-width="1.1" fill="none"/><path d="M814.5 970V961.5H1513.5V970" stroke="#000" stroke-width="1" fill="none"/><path d="M989.5 961.5V966M1164.5 961.5V970M1338.5 961.5V966" stroke="#000" stroke-width="1" fill="none"/></svg><div class="lbl r" style="left:-35.39999999999998px;top:60px;width:80px;">40.0</div><div class="lbl" style="left:56px;top:60px;">Ptrac [cmH2O]</div><div class="lbl r" style="left:-35.39999999999998px;top:159.5px;width:80px;">30.0</div><div class="lbl r" style="left:-35.39999999999998px;top:266.5px;width:80px;">20.0</div><div class="lbl r" style="left:-35.39999999999998px;top:373.5px;width:80px;">10.0</div><div class="lbl r" style="left:-38px;top:473.5px;width:80px;">0.0</div><div class="lbl" style="left:6px;top:922px;width:100px;text-align:center;">0:51: 0</div><div class="lbl" style="left:182px;top:922px;width:100px;text-align:center;">0:52:15</div><div class="lbl" style="left:357px;top:922px;width:100px;text-align:center;">0:53:30</div><div class="lbl" style="left:531px;top:922px;width:100px;text-align:center;">0:54:45</div><div class="lbl r" style="left:673px;top:922px;width:80px;"><span style="letter-spacing:-0.2px">0:56: 0[h:m:s]</span></div><div class="cwb"></div></div>
<div class="cw" style="left:1519.6px;top:50px;width:160.4px;height:278.6px"><div class="ct"><svg class="abs" style="left:6.4px;top:9px" width="16" height="16" viewBox="0 0 16 16"><path d="M1.2 0.3V14.2H15.2" stroke="#00003a" stroke-width="1.5" fill="none"/><path d="M1 15.3H15.2" stroke="#00003a" stroke-width="1" stroke-dasharray="2.4 1.2" fill="none"/><path d="M2.3 12.3L5.5 10.6L9 7L13.5 3.6" stroke="#12a070" stroke-width="1.4" fill="none"/><path d="M2.3 10.6L5 9.6L8.4 5.4" stroke="#0a0a30" stroke-width="1.4" fill="none"/><path d="M8.4 5.4L14.2 10.8" stroke="#8a1060" stroke-width="1.5" fill="none"/></svg><div class="t" style="left:26.4px">Param<span style="letter-spacing:1.8px">...</span></div><div class="xb in" style="left:86.9px;top:6px;background:linear-gradient(135deg,#6484e6 0%,#4a70e2 50%,#3f78ec 100%)"><div class="abs" style="left:3.5px;top:11.5px;width:7px;height:3px;background:#fff"></div></div><div class="xb in" style="left:109.9px;top:6px;background:linear-gradient(135deg,#6484e6 0%,#4a70e2 50%,#3f78ec 100%)"><div class="abs" style="left:3.5px;top:3.5px;width:11px;height:11px;border:1px solid #fff;border-top-width:3px"></div></div><div class="xb in" style="left:132.9px;top:6px;background:linear-gradient(135deg,#c86a80 0%,#c0606c 50%,#b8605c 100%)"><svg class="abs" style="left:-0.5px;top:-0.5px" width="19" height="19" viewBox="0 0 19 19"><path d="M5 5L14 14M14 5L5 14" stroke="#fff" stroke-width="2.1" stroke-linecap="butt"/></svg></div></div><div class="tb" style="left:4.4px;top:30px;width:151.5px;height:244.4px;border-top:1px solid #8a8878;border-left:1px solid #8a8878"></div><div class="abs" style="left:5.4px;top:31px;width:131px;height:226px;background:#fff;overflow:hidden"><div class="gh" style="left:0;top:0;width:65px">Parameter</div><div class="gh" style="left:65px;top:0;width:65px">Value</div><div class="gc" style="left:0;top:20px;width:65px;padding-left:3px;outline:1px dotted #000;outline-offset:-2px;">Time</div><div class="gc" style="left:65px;top:20px;width:65px;padding-left:3px">&nbsp;0:55:13</div><div class="gc" style="left:0;top:39px;width:65px;padding-left:3px;">Timestamp</div><div class="gc" style="left:65px;top:39px;width:65px;padding-left:3px">3313.664</div><div class="gc" style="left:0;top:58px;width:65px;padding-left:3px;">RR</div><div class="gc" style="left:65px;top:58px;width:65px;padding-left:3px">-9999</div><div class="gc" style="left:0;top:77px;width:65px;padding-left:3px;">MaxInsFL</div><div class="gc" style="left:65px;top:77px;width:65px;padding-left:3px">&nbsp;1054</div><div class="gc" style="left:0;top:96px;width:65px;padding-left:3px;">MaxExpFL</div><div class="gc" style="left:65px;top:96px;width:65px;padding-left:3px">-1411</div><div class="gc" style="left:0;top:115px;width:65px;padding-left:3px;">TV_</div><div class="gc" style="left:65px;top:115px;width:65px;padding-left:3px">-89277</div><div class="gc" style="left:0;top:134px;width:65px;padding-left:3px;">Ptracmax</div><div class="gc" style="left:65px;top:134px;width:65px;padding-left:3px">&nbsp;15.7</div><div class="gc" style="left:0;top:153px;width:65px;padding-left:3px;">Ptracmin</div><div class="gc" style="left:65px;top:153px;width:65px;padding-left:3px">&nbsp;&nbsp;0.2</div><div class="gc" style="left:0;top:172px;width:65px;padding-left:3px;">Res</div><div class="gc" style="left:65px;top:172px;width:65px;padding-left:3px">-9999.0000</div><div class="gc" style="left:0;top:191px;width:65px;padding-left:3px;">Compl</div><div class="gc" style="left:65px;top:191px;width:65px;padding-left:3px">-9999.00</div><div class="gc" style="left:0;top:210px;width:65px;padding-left:3px;">Cond</div><div class="gc" style="left:65px;top:210px;width:65px;padding-left:3px">&nbsp;0.00</div></div><div class="sb" style="left:137.4px;top:31px;width:17px;height:226px"></div><div class="sbb" style="left:137.4px;top:31px"><svg class="abs" style="left:2px;top:3px" width="10" height="8" viewBox="0 0 10 8"><path d="M1 6L5 2L9 6" stroke="#4d6185" stroke-width="2" fill="none"/></svg></div><div class="sbb" style="left:137.4px;top:48px"><svg class="abs" style="left:3px;top:3px" width="8" height="8" viewBox="0 0 8 8"><path d="M0 0.5H8M0 2.5H8M0 4.5H8M0 6.5H8" stroke="#8ea4e0" stroke-width="1"/></svg></div><div class="sbb" style="left:137.4px;top:240px"><svg class="abs" style="left:2px;top:3px" width="10" height="8" viewBox="0 0 10 8"><path d="M1 2L5 6L9 2" stroke="#4d6185" stroke-width="2" fill="none"/></svg></div><div class="sb" style="left:5.4px;top:257px;width:131px;height:16px"></div><div class="sbb" style="left:6.4px;top:257px"><svg class="abs" style="left:3px;top:2px" width="8" height="10" viewBox="0 0 8 10"><path d="M6 1L2 5L6 9" stroke="#4d6185" stroke-width="2" fill="none"/></svg></div><div class="sbb" style="left:23.4px;top:257px"><svg class="abs" style="left:3px;top:3px" width="8" height="8" viewBox="0 0 8 8"><path d="M0.5 0V8M2.5 0V8M4.5 0V8M6.5 0V8" stroke="#8ea4e0" stroke-width="1"/></svg></div><div class="sbb" style="left:119.4px;top:257px"><svg class="abs" style="left:3px;top:2px" width="8" height="10" viewBox="0 0 8 10"><path d="M2 1L6 5L2 9" stroke="#4d6185" stroke-width="2" fill="none"/></svg></div><svg class="abs" style="left:139.4px;top:258px" width="14" height="14" viewBox="0 0 14 14"><g fill="#b8b4a2"><rect x="9" y="3" width="2" height="2"/><rect x="5" y="7" width="2" height="2"/><rect x="9" y="7" width="2" height="2"/><rect x="1" y="11" width="2" height="2"/><rect x="5" y="11" width="2" height="2"/><rect x="9" y="11" width="2" height="2"/></g></svg><div class="cwb"></div></div>
<div class="cw" style="left:1519.6px;top:328.6px;width:160.4px;height:666.7px"><div class="ct" style="height:22px"><div class="t" style="left:4.4px;top:7.4px;font-size:11px;color:#e6edfb">Control</div></div><div class="tb" style="left:4.4px;top:22.4px;width:151.5px;height:639.7px"></div><div class="abs" style="left:5.4px;top:23.4px;width:149px;height:32px;background:#ece9d8;border-top:1px solid #f6f5ee;text-align:center;font-size:23px;line-height:30px;padding-left:6px">0:55:13</div><div class="abs" style="left:5.4px;top:56.4px;width:149px;height:31px;background:#ff0000;text-align:center;font-size:13px;font-weight:bold;line-height:31px;color:#6c0000;letter-spacing:0.5px">Save OFF</div><div class="abs" style="left:5.4px;top:93.4px;width:149px;height:33px;border:1px solid #c9c6b4;box-shadow:inset 1px 1px 0 #fff, 1px 1px 0 #fff"></div><div class="lbl" style="left:11.4px;top:88.4px;background:#ece9d8;padding:0 1px"><span style="letter-spacing:-0.2px">Concentration</span></div><div class="combo" style="left:11.9px;top:104.4px;width:82px;height:18px"><div class="v" style="left:2px;top:2px">1E-10</div><div class="a" style="width:15px;height:15px"><svg class="abs" style="left:3.0px;top:4.5px" width="7" height="4" viewBox="0 0 7 4"><path d="M0 0H7L3.5 4Z" fill="#000"/></svg></div></div><div class="btn" style="left:95.4px;top:103.4px;width:46px;height:20px;line-height:18px;font-weight:bold;font-size:13px;letter-spacing:0.9px">Set</div><div class="abs" style="left:5.4px;top:133.4px;width:149px;height:33px;border:1px solid #c9c6b4;box-shadow:inset 1px 1px 0 #fff, 1px 1px 0 #fff"></div><div class="lbl" style="left:11.4px;top:128.4px;background:#ece9d8;padding:0 1px">Event</div><div class="combo" style="left:11.9px;top:144.4px;width:82px;height:18px"><div class="v" style="left:2px;top:2px">Aerosol</div><div class="a" style="width:15px;height:15px"><svg class="abs" style="left:3.0px;top:4.5px" width="7" height="4" viewBox="0 0 7 4"><path d="M0 0H7L3.5 4Z" fill="#000"/></svg></div></div><div class="btn" style="left:95.4px;top:143.4px;width:46px;height:20px;line-height:18px;font-weight:bold;font-size:13px;letter-spacing:0.9px">Set</div><div class="abs" style="left:5.4px;top:172.4px;width:150px;height:34px;border:1px solid;border-color:#fff #c9c6b4 #c9c6b4 #fff"></div><div class="btn" style="left:8.4px;top:177.4px;width:65px;height:25px;line-height:23px;font-weight:bold;font-size:13px;letter-spacing:0.5px">Stop</div><div class="btn def" style="left:80.4px;top:177.4px;width:65px;height:25px;line-height:23px;font-weight:bold;font-size:13px;letter-spacing:0.2px">Continue</div><div class="cwb"></div></div>
<div class="abs" style="left:759px;top:54px;width:1.1px;height:941px;background:linear-gradient(180deg,rgba(42,58,120,0.3) 0,rgba(42,58,120,0.7) 26px,#2a3a78 30px)"></div><div class="abs" style="left:0;top:995.3px;width:1680px;height:2.4px;background:linear-gradient(180deg,#54547c,#615e5e)"></div><svg class="abs" style="left:752.5px;top:50px" width="14" height="6" viewBox="0 0 14 6"><path d="M0 0H14L8 4.5V6H6V4.5Z" fill="#7790b0" opacity="0.55"/></svg><svg class="abs" style="left:1512.6px;top:50px" width="14" height="6" viewBox="0 0 14 6"><path d="M0 0H14L8 4.5V6H6V4.5Z" fill="#7790b0" opacity="0.55"/></svg>
<div id="task"><div id="start"><svg class="abs" style="left:10px;top:6px" width="19" height="17" viewBox="0 0 20 19"><path d="M2 3Q5 1 9 3L8 9Q4 7 1 9Z" fill="#e8542a"/><path d="M10.5 3.5Q14 5.5 18 3.5L17 9.5Q13 11.5 9.5 9.5Z" fill="#7cc242"/><path d="M1 10Q4 8 8 10L7 16Q3 14 0 16Z" fill="#4a8ae8"/><path d="M9.3 10.5Q13 12.5 16.8 10.5L15.8 16.5Q12 18.5 8.3 16.5Z" fill="#f6c420"/></svg><div class="t">start</div></div><div class="abs" style="left:107px;top:3px;width:159px;height:24px;border-radius:3px;background:#1f51c0;box-shadow:inset 1px 1px 2px #163c94"><svg class="abs" style="left:10px;top:4px" width="16" height="16" viewBox="0 0 16 16"><path d="M1.2 0.3V14.2H15.2" stroke="#00003a" stroke-width="1.5" fill="none"/><path d="M1 15.3H15.2" stroke="#00003a" stroke-width="1" stroke-dasharray="2.4 1.2" fill="none"/><path d="M2.3 12.3L5.5 10.6L9 7L13.5 3.6" stroke="#12a070" stroke-width="1.4" fill="none"/><path d="M2.3 10.6L5 9.6L8.4 5.4" stroke="#0a0a30" stroke-width="1.4" fill="none"/><path d="M8.4 5.4L14.2 10.8" stroke="#8a1060" stroke-width="1.5" fill="none"/></svg><div class="lbl" style="left:29px;top:6px;color:#fff">Phoenix</div></div><div id="tray"><div class="abs" style="left:-10px;top:6px;width:19px;height:19px;border-radius:10px;background:radial-gradient(circle at 40% 35%,#6ac0ff,#1a78e0 70%);border:1px solid #8ad0ff"><svg class="abs" style="left:3px;top:3.5px" width="10" height="10" viewBox="0 0 10 10"><path d="M7 1L3 5L7 9" stroke="#fff" stroke-width="2" fill="none"/></svg></div><div class="abs" style="left:10.5px;top:7.5px;width:15px;height:15px;border-radius:3px;background:#c8c8c8;border:1px solid #1a1a2a"><div class="abs" style="left:1px;top:1px;width:11px;height:11px;border-radius:6px;background:#d83030;color:#fff;font-size:9px;font-weight:bold;line-height:10px;text-align:center">x</div></div><svg class="abs" style="left:28px;top:6px" width="18" height="18" viewBox="0 0 18 18"><rect x="6" y="1" width="8" height="7" fill="#1c1c58" stroke="#101030"/><rect x="1" y="6" width="8" height="7" fill="#30307a" stroke="#101030"/><circle cx="4" cy="13" r="2.2" fill="#cfe0ff" opacity="0.8"/><path d="M9 10L15 16M15 10L9 16" stroke="#e02020" stroke-width="2"/></svg><div class="abs" style="left:46px;top:7.5px;width:15px;height:15px;background:#d8d4d4;border:1px solid #1a1a2a;border-radius:3px;color:#d01020;font-weight:bold;font-size:15px;line-height:13px;text-align:center;letter-spacing:-1px;text-indent:-1px;-webkit-text-stroke:0.7px #d01020">M</div><div class="abs" style="left:65px;top:10px;width:16px;height:9px;background:#d01020;border-radius:5px 2px 5px 2px;color:#fff;font-weight:bold;font-style:italic;font-size:8px;line-height:9px;text-align:center">ATI</div><div class="lbl" style="left:86.5px;top:10px;color:#fff;letter-spacing:-0.3px">12:23 PM</div></div></div>
</body></html>
